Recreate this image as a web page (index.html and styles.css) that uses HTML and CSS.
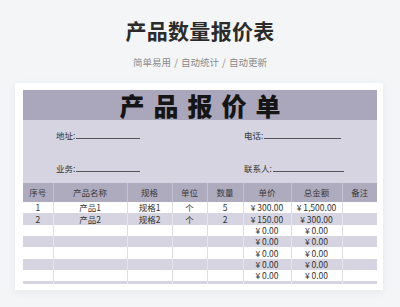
FILE: index.html
```html
<!DOCTYPE html>
<html lang="zh">
<head>
<meta charset="utf-8">
<title>产品数量报价表</title>
<link rel="stylesheet" href="styles.css">
</head>
<body>
<div class="page">
  <h1 class="title">产品数量报价表</h1>
  <p class="subtitle">简单易用 / 自动统计 / 自动更新</p>
  <div class="card">
    <div class="sheet">
      <div class="sheet-title"><span>产品报价单</span></div>
      <div class="info">
        <div class="field field-l">地址:<span class="line l1"></span></div>
        <div class="field field-r">电话:<span class="line l2"></span></div>
        <div class="field field-l">业务:<span class="line l1"></span></div>
        <div class="field field-r">联系人:<span class="line l3"></span></div>
      </div>
      <table class="grid">
        <colgroup>
          <col class="c1"><col class="c2"><col class="c3"><col class="c4">
          <col class="c5"><col class="c6"><col class="c7"><col class="c8">
        </colgroup>
        <thead>
          <tr><th>序号</th><th>产品名称</th><th>规格</th><th>单位</th><th>数量</th><th>单价</th><th>总金额</th><th>备注</th></tr>
        </thead>
        <tbody>
          <tr><td>1</td><td>产品1</td><td>规格1</td><td>个</td><td>5</td><td>¥ 300.00</td><td>¥ 1,500.00</td><td></td></tr>
          <tr><td>2</td><td>产品2</td><td>规格2</td><td>个</td><td>2</td><td>¥ 150.00</td><td>¥ 300.00</td><td></td></tr>
          <tr><td></td><td></td><td></td><td></td><td></td><td>¥ 0.00</td><td>¥ 0.00</td><td></td></tr>
          <tr><td></td><td></td><td></td><td></td><td></td><td>¥ 0.00</td><td>¥ 0.00</td><td></td></tr>
          <tr><td></td><td></td><td></td><td></td><td></td><td>¥ 0.00</td><td>¥ 0.00</td><td></td></tr>
          <tr><td></td><td></td><td></td><td></td><td></td><td>¥ 0.00</td><td>¥ 0.00</td><td></td></tr>
          <tr><td></td><td></td><td></td><td></td><td></td><td>¥ 0.00</td><td>¥ 0.00</td><td></td></tr>
          <tr><td></td><td></td><td></td><td></td><td></td><td>¥ 0.00</td><td>¥ 0.00</td><td></td></tr>
        </tbody>
      </table>
    </div>
  </div>
</div>
</body>
</html>
```
FILE: styles.css
```css
* { box-sizing: border-box; }
html, body {
  margin: 0;
  padding: 0;
  background: #f4f5f7;
  font-family: "Noto Sans CJK SC", "Noto Sans", sans-serif;
  overflow: hidden;
}
.page {
  width: 400px;
  height: 307px;
  padding-top: 15px;
}
.title {
  margin: 0;
  height: 30px;
  line-height: 30px;
  text-align: center;
  font-size: 21px;
  font-weight: 700;
  color: #2b2b2b;
  letter-spacing: 0.3px;
}
.subtitle {
  margin: 9px 0 0;
  height: 16px;
  line-height: 16px;
  text-align: center;
  font-size: 9.5px;
  color: #8a8a8a;
  word-spacing: 1px;
}
.card {
  margin: 13px 17px 0 15px;
  height: 207px;
  background: #fff;
  padding: 7px 6px 6px 8px;
  box-shadow: 0 2px 8px rgba(60, 60, 80, 0.07);
}
.sheet {
  height: 194px;
  overflow: hidden;
  background: #d5d4e0;
}
.sheet-title {
  height: 30px;
  background: #aaa7bc;
  display: flex;
  align-items: center;
  justify-content: center;
}
.sheet-title span {
  font-size: 25px;
  font-weight: 900;
  line-height: 30px;
  color: #151515;
  letter-spacing: 9px;
  margin-right: -9px;
}
.info {
  height: 63px;
  background: #d5d4e0;
  display: grid;
  grid-template-columns: 188px 1fr;
  grid-template-rows: 26px 26px;
  row-gap: 7px;
  padding: 2px 0 0 33px;
  align-items: center;
}
.field {
  font-size: 8.5px;
  color: #333;
  display: flex;
  align-items: baseline;
  white-space: nowrap;
}
.line {
  display: inline-block;
  height: 1px;
  border-bottom: 1px solid #555;
  margin-left: 1px;
}
.l1 { width: 64px; }
.l2 { width: 77px; }
.l3 { width: 71px; }
.grid {
  width: 354px;
  border-collapse: collapse;
  table-layout: fixed;
  font-size: 8.5px;
  color: #333;
}
.c1 { width: 30px; }
.c2 { width: 74px; }
.c3 { width: 45px; }
.c4 { width: 35px; }
.c5 { width: 36px; }
.c6 { width: 48px; }
.c7 { width: 51px; }
.c8 { width: 35px; }
.grid th {
  height: 19px;
  background: #aeabbf;
  font-weight: 400;
  color: #3a3a3a;
  border-left: 1px solid #c4c2d2;
  padding: 0;
  line-height: 1;
  text-align: center;
}
.grid th:first-child, .grid td:first-child { border-left: none; }
.grid td {
  height: 11.33px;
  padding: 0;
  line-height: 1;
  text-align: center;
  border-left: 1px solid #dddde3;
  background: #fff;
}
.grid tbody tr:nth-child(even) td {
  background: #d5d4e0;
  border-left-color: #e6e5ed;
}
```
